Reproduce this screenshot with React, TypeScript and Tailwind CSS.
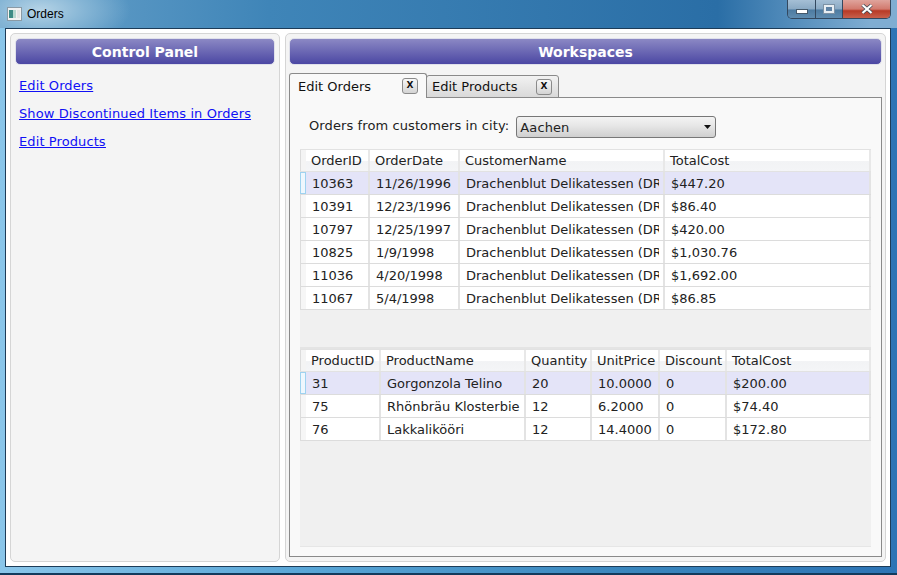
const font = "font-['DejaVu_Sans',Verdana,sans-serif]";

const orderColumns = [
  { title: "OrderID", width: "w-[64px]" },
  { title: "OrderDate", width: "w-[90px]" },
  { title: "CustomerName", width: "w-[205px]" },
  { title: "TotalCost", width: "flex-1" },
];

const orders = [
  ["10363", "11/26/1996", "Drachenblut Delikatessen (DR", "$447.20"],
  ["10391", "12/23/1996", "Drachenblut Delikatessen (DR", "$86.40"],
  ["10797", "12/25/1997", "Drachenblut Delikatessen (DR", "$420.00"],
  ["10825", "1/9/1998", "Drachenblut Delikatessen (DR", "$1,030.76"],
  ["11036", "4/20/1998", "Drachenblut Delikatessen (DR", "$1,692.00"],
  ["11067", "5/4/1998", "Drachenblut Delikatessen (DR", "$86.85"],
];

const productColumns = [
  { title: "ProductID", width: "w-[75px]" },
  { title: "ProductName", width: "w-[145px]" },
  { title: "Quantity", width: "w-[66px]" },
  { title: "UnitPrice", width: "w-[68px]" },
  { title: "Discount", width: "w-[67px]" },
  { title: "TotalCost", width: "flex-1" },
];

const products = [
  ["31", "Gorgonzola Telino", "20", "10.0000", "0", "$200.00"],
  ["75", "Rhönbräu Klosterbie", "12", "6.2000", "0", "$74.40"],
  ["76", "Lakkalikööri", "12", "14.4000", "0", "$172.80"],
];

type Column = { title: string; width: string };

function DataGrid({ columns, rows, height }: { columns: Column[]; rows: string[][]; height: string }) {
  return (
    <div className={`${height} flex flex-col bg-[#f0f0f0]`}>
      <div className="flex h-[23px] shrink-0 border-y border-[#e2e2e2] bg-[linear-gradient(#ffffff_0%,#ffffff_50%,#f2f3f5_55%,#f4f5f7_100%)]">
        <div className="w-1.5 shrink-0 border-l border-[#dcdcdc] bg-[#f4f4f4]" />
        {columns.map((col) => (
          <div key={col.title} className={`${col.width} shrink-0 border-r-2 border-[#e8e8e8] pl-[5px] text-[13px] leading-[22px] text-[#222222]`}>
            {col.title}
          </div>
        ))}
      </div>
      {rows.map((row, i) => (
        <div key={row[0]} className={`flex h-[23px] shrink-0 border-b border-[#dcdcdc] ${i === 0 ? "bg-[#e4e4f8]" : "bg-white"}`}>
          <div className={`w-1.5 shrink-0 ${i === 0 ? "border border-[#9ed2f0] bg-[#eef7fd]" : "border-l border-[#dcdcdc] bg-[#f6f6f6]"}`} />
          {row.map((cell, j) => (
            <div key={j} className={`${columns[j].width} shrink-0 border-r-2 border-[#e3e3e3] pl-[6px] pr-1`}>
              <div className="overflow-hidden whitespace-nowrap text-[13px] leading-[24px] text-[#222222]">{cell}</div>
            </div>
          ))}
        </div>
      ))}
    </div>
  );
}

function PanelHeader({ title }: { title: string }) {
  return (
    <div className="flex h-[27px] shrink-0 items-center justify-center rounded-[5px] border border-[#dfe0ea] bg-[linear-gradient(#8b88c4,#4b47a3)] text-sm font-bold text-white">
      {title}
    </div>
  );
}

function CloseTab() {
  return (
    <div className="flex h-4 w-4 items-center justify-center rounded-[3px] border border-[#8a8a8a] bg-[linear-gradient(#f8f8f8,#d4d4d4)] text-[9px] font-bold text-[#111111]">
      X
    </div>
  );
}

export default function App() {
  return (
    <div className={`${font} flex h-[575px] w-[897px] flex-col overflow-hidden bg-[linear-gradient(90deg,#8ac6ea_0%,#58a5d6_35%,#3a86bd_70%,#2d74b5_100%)]`}>
      {/* Title bar */}
      <div className="flex h-7 shrink-0 items-start justify-between bg-[radial-gradient(ellipse_90px_40px_at_40px_10px,#b5d3e6_0%,#85b5d5_50%,transparent_100%),linear-gradient(90deg,#6aa3cb_0%,#3f85b8_30%,#2a6ea6_80%,#7fadd2_97%)] pl-[7px] pr-[6px]">
        <div className="flex h-7 items-center gap-[5px]">
          <svg width="15" height="14" viewBox="0 0 15 14">
            <rect x="0.5" y="0.5" width="14" height="13" fill="#f2f2f2" stroke="#8a9aa5" />
            <rect x="2" y="3" width="4" height="8" fill="#3d8b85" />
            <rect x="6" y="3" width="3" height="8" fill="#b8d8d0" />
            <rect x="10" y="3" width="3" height="8" fill="#e4e4e4" />
          </svg>
          <span className="font-['Liberation_Sans',Arial,sans-serif] text-xs text-black">Orders</span>
        </div>
        <div className="flex h-[19px] overflow-hidden rounded-b-[5px] border border-t-0 border-[#33485f]">
          <div className="flex w-[28px] items-end justify-center border-r border-[#33485f] bg-[linear-gradient(#a5bfd5_0%,#8aa9c4_50%,#4d7ba1_55%,#5f8cb0_100%)] pb-1">
            <div className="h-[5px] w-[12px] border border-[#44586a] bg-white" />
          </div>
          <div className="flex w-[27px] items-center justify-center border-r border-[#33485f] bg-[linear-gradient(#a5bfd5_0%,#8aa9c4_50%,#4d7ba1_55%,#5f8cb0_100%)]">
            <div className="h-[8px] w-[10px] border-2 border-[#e8eef3] bg-[#5f83a5] shadow-[0_0_0_1px_#7d92a5]" />
          </div>
          <div className="flex w-[47px] items-center justify-center bg-[linear-gradient(#dfa49c_0%,#d27a6e_50%,#b83a26_60%,#c7604c_100%)]">
            <svg width="12" height="10" viewBox="0 0 12 10">
              <path d="M1.5 1 L10.5 9 M10.5 1 L1.5 9" stroke="#3f4a55" strokeWidth="3.6" />
              <path d="M1.5 1 L10.5 9 M10.5 1 L1.5 9" stroke="#ffffff" strokeWidth="2.2" />
            </svg>
          </div>
        </div>
      </div>

      {/* Client area */}
      <div className="ml-[5px] mr-[6px] flex h-[539px] shrink-0 gap-[5px] border border-[#1d3c58] bg-white p-1">
        {/* Control panel */}
        <div className="flex w-[270px] flex-col rounded-[5px] border border-[#d5d5d5] bg-[#f4f4f4] px-1 pt-1">
          <PanelHeader title="Control Panel" />
          <div className="flex flex-col gap-[11px] pl-1 pt-3 text-[13px] leading-[17px] tracking-[0.1px] text-[#1010f5] underline">
            <a href="#">Edit Orders</a>
            <a href="#">Show Discontinued Items in Orders</a>
            <a href="#">Edit Products</a>
          </div>
        </div>

        {/* Workspaces */}
        <div className="flex flex-1 flex-col rounded-[5px] border border-[#d5d5d5] bg-[#f4f4f4] px-[3px] pt-1">
          <PanelHeader title="Workspaces" />
          {/* Tabs */}
          <div className="relative z-10 mt-[7px] flex h-[25px] shrink-0 items-end">
            <div className="relative z-10 -mb-px flex h-[25px] w-[138px] items-start justify-between rounded-t-[3px] border border-b-0 border-[#8a8a8a] bg-[#f9f9f9] px-2 pt-[3px] text-[13px] text-[#111111]">
              <span>Edit Orders</span>
              <span className="mt-px"><CloseTab /></span>
            </div>
            <div className="-mb-px -ml-px flex h-[23px] w-[133px] items-center justify-between rounded-t-[3px] border border-[#8a8a8a] bg-[linear-gradient(#f2f2f2,#d9d9d9)] pl-[5px] pr-[6px] text-[13px] text-[#111111]">
              <span>Edit Products</span>
              <CloseTab />
            </div>
          </div>
          <div className="h-[460px] shrink-0 border border-[#8a8a8a] bg-[#f9f9f9] px-[10px] pt-[18px]">
            <div className="flex h-[22px] items-center gap-[7px] pl-[9px] text-[13px] tracking-[0.1px] text-[#222222]">
              <span className="pb-[2px]">Orders from customers in city:</span>
              <div className="flex h-[22px] w-[200px] items-center justify-between rounded-[3px] border border-[#777777] bg-[linear-gradient(#f4f4f4,#e6e6e6_45%,#cfcfcf)] pl-[3px] pr-1">
                <span className="pt-[2px]">Aachen</span>
                <svg width="7" height="4" viewBox="0 0 7 4"><path d="M0 0h7L3.5 4z" fill="#111111" /></svg>
              </div>
            </div>
            <div className="mt-[11px] border-b border-[#e6e6e6] bg-[#f0f0f0]">
              <DataGrid columns={orderColumns} rows={orders} height="h-[198px]" />
              <div className="border-t-2 border-[#e4e4e4]">
                <DataGrid columns={productColumns} rows={products} height="h-[197px]" />
              </div>
            </div>
          </div>
        </div>
      </div>

      {/* Bottom frame */}
      <div className="h-2 shrink-0 border-b-2 border-[#123a5c]" />
    </div>
  );
}
